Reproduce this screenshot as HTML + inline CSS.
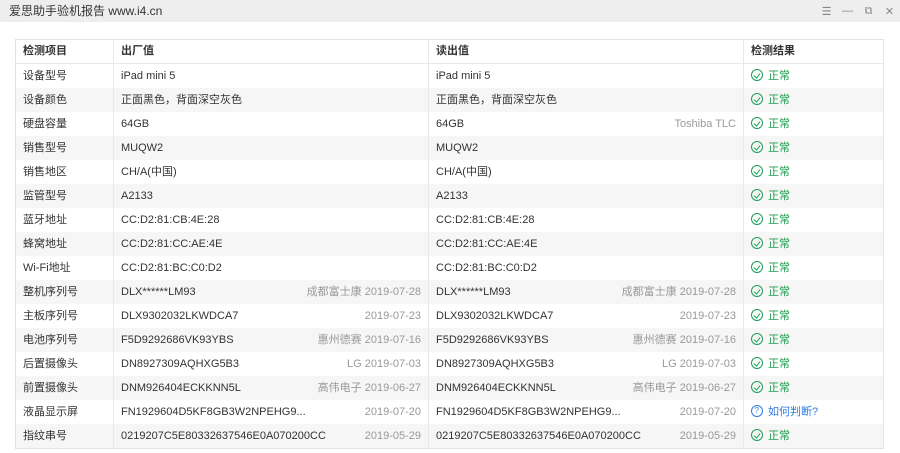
<!DOCTYPE html>
<html><head><meta charset="utf-8"><style>
*{margin:0;padding:0;box-sizing:border-box}
body{width:900px;height:453px;background:#fff;font-family:"Liberation Sans","Noto Sans CJK SC",sans-serif;font-size:11px;color:#333;position:relative;overflow:hidden}
.tb{height:22px;background:#eeeeee;line-height:22px;padding-left:9px;font-size:12px;color:#333}
.ctl{position:absolute;top:0;right:0;height:22px;display:flex;align-items:center}
.ctl span{width:21px;text-align:center;color:#888;font-size:11px}
table{position:absolute;left:15px;top:39px;width:869px;border-collapse:collapse;border:1px solid #e3e3e3;table-layout:fixed}
td{height:24px;line-height:24px;padding:0 7px;border-right:1px solid #e8e8e8;white-space:nowrap;vertical-align:middle}
td div{display:flex;justify-content:space-between;height:24px;line-height:24px}
tr:nth-child(odd) td{background:#f6f6f6}
tr:first-child td{background:#fff;font-weight:bold;border-bottom:1px solid #e8e8e8;height:23px;line-height:23px}
.c1{width:98px}.c2,.c3{width:315px}
.g{color:#999}
.ok{color:#1a9e52}.q{color:#2e7be0}
.ic{display:inline-block;width:12px;height:12px;border:1.3px solid currentColor;border-radius:50%;vertical-align:-2px;margin-right:5px;position:relative;font-style:normal}
.ok .ic:after{content:"";position:absolute;left:3px;top:1.5px;width:3px;height:5px;border:solid currentColor;border-width:0 1.3px 1.3px 0;transform:rotate(40deg)}
.q .ic:after{content:"?";position:absolute;left:0;top:0;width:9.4px;height:9.4px;font-size:8px;line-height:9.4px;text-align:center}
</style></head><body>
<div class="tb">爱思助手验机报告 www.i4.cn</div>
<div class="ctl"><span>☰</span><span>—</span><span>⧉</span><span>✕</span></div>
<table>
<tr><td class="c1">检测项目</td><td class="c2">出厂值</td><td class="c3">读出值</td><td>检测结果</td></tr>
<tr><td>设备型号</td><td>iPad mini 5</td><td>iPad mini 5</td><td class="ok"><i class="ic"></i>正常</td></tr>
<tr><td>设备颜色</td><td>正面黑色，背面深空灰色</td><td>正面黑色，背面深空灰色</td><td class="ok"><i class="ic"></i>正常</td></tr>
<tr><td>硬盘容量</td><td>64GB</td><td><div><span>64GB</span><span class="g">Toshiba TLC</span></div></td><td class="ok"><i class="ic"></i>正常</td></tr>
<tr><td>销售型号</td><td>MUQW2</td><td>MUQW2</td><td class="ok"><i class="ic"></i>正常</td></tr>
<tr><td>销售地区</td><td>CH/A(中国)</td><td>CH/A(中国)</td><td class="ok"><i class="ic"></i>正常</td></tr>
<tr><td>监管型号</td><td>A2133</td><td>A2133</td><td class="ok"><i class="ic"></i>正常</td></tr>
<tr><td>蓝牙地址</td><td>CC:D2:81:CB:4E:28</td><td>CC:D2:81:CB:4E:28</td><td class="ok"><i class="ic"></i>正常</td></tr>
<tr><td>蜂窝地址</td><td>CC:D2:81:CC:AE:4E</td><td>CC:D2:81:CC:AE:4E</td><td class="ok"><i class="ic"></i>正常</td></tr>
<tr><td>Wi-Fi地址</td><td>CC:D2:81:BC:C0:D2</td><td>CC:D2:81:BC:C0:D2</td><td class="ok"><i class="ic"></i>正常</td></tr>
<tr><td>整机序列号</td><td><div><span>DLX******LM93</span><span class="g">成都富士康 2019-07-28</span></div></td><td><div><span>DLX******LM93</span><span class="g">成都富士康 2019-07-28</span></div></td><td class="ok"><i class="ic"></i>正常</td></tr>
<tr><td>主板序列号</td><td><div><span>DLX9302032LKWDCA7</span><span class="g">2019-07-23</span></div></td><td><div><span>DLX9302032LKWDCA7</span><span class="g">2019-07-23</span></div></td><td class="ok"><i class="ic"></i>正常</td></tr>
<tr><td>电池序列号</td><td><div><span>F5D9292686VK93YBS</span><span class="g">惠州德赛 2019-07-16</span></div></td><td><div><span>F5D9292686VK93YBS</span><span class="g">惠州德赛 2019-07-16</span></div></td><td class="ok"><i class="ic"></i>正常</td></tr>
<tr><td>后置摄像头</td><td><div><span>DN8927309AQHXG5B3</span><span class="g">LG 2019-07-03</span></div></td><td><div><span>DN8927309AQHXG5B3</span><span class="g">LG 2019-07-03</span></div></td><td class="ok"><i class="ic"></i>正常</td></tr>
<tr><td>前置摄像头</td><td><div><span>DNM926404ECKKNN5L</span><span class="g">高伟电子 2019-06-27</span></div></td><td><div><span>DNM926404ECKKNN5L</span><span class="g">高伟电子 2019-06-27</span></div></td><td class="ok"><i class="ic"></i>正常</td></tr>
<tr><td>液晶显示屏</td><td><div><span>FN1929604D5KF8GB3W2NPEHG9...</span><span class="g">2019-07-20</span></div></td><td><div><span>FN1929604D5KF8GB3W2NPEHG9...</span><span class="g">2019-07-20</span></div></td><td class="q"><i class="ic"></i>如何判断?</td></tr>
<tr><td>指纹串号</td><td><div><span>0219207C5E80332637546E0A070200CC</span><span class="g">2019-05-29</span></div></td><td><div><span>0219207C5E80332637546E0A070200CC</span><span class="g">2019-05-29</span></div></td><td class="ok"><i class="ic"></i>正常</td></tr>
</table>
</body></html>
